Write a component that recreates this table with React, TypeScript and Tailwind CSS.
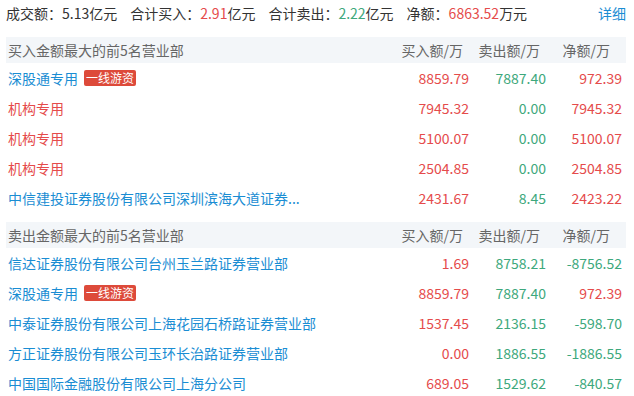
import React from "react";

type Row = {
  name: string;
  nameColor: "blue" | "red";
  tag?: string;
  buy: string;
  sell: string;
  net: string;
};

const buyRows: Row[] = [
  { name: "深股通专用", nameColor: "blue", tag: "一线游资", buy: "8859.79", sell: "7887.40", net: "972.39" },
  { name: "机构专用", nameColor: "red", buy: "7945.32", sell: "0.00", net: "7945.32" },
  { name: "机构专用", nameColor: "red", buy: "5100.07", sell: "0.00", net: "5100.07" },
  { name: "机构专用", nameColor: "red", buy: "2504.85", sell: "0.00", net: "2504.85" },
  { name: "中信建投证券股份有限公司深圳滨海大道证券...", nameColor: "blue", buy: "2431.67", sell: "8.45", net: "2423.22" },
];

const sellRows: Row[] = [
  { name: "信达证券股份有限公司台州玉兰路证券营业部", nameColor: "blue", buy: "1.69", sell: "8758.21", net: "-8756.52" },
  { name: "深股通专用", nameColor: "blue", tag: "一线游资", buy: "8859.79", sell: "7887.40", net: "972.39" },
  { name: "中泰证券股份有限公司上海花园石桥路证券营业部", nameColor: "blue", buy: "1537.45", sell: "2136.15", net: "-598.70" },
  { name: "方正证券股份有限公司玉环长治路证券营业部", nameColor: "blue", buy: "0.00", sell: "1886.55", net: "-1886.55" },
  { name: "中国国际金融股份有限公司上海分公司", nameColor: "blue", buy: "689.05", sell: "1529.62", net: "-840.57" },
];

function Section({ title, rows, className }: { title: string; rows: Row[]; className?: string }) {
  return (
    <div className={className}>
      <div className="grid grid-cols-[1fr_77px_77px_80px] h-[26px] items-center bg-[#f3f6f9] text-[#666] pl-[2px]">
        <div>{title}</div>
        <div className="text-right pr-[6px]">买入额/万</div>
        <div className="text-right pr-[6px]">卖出额/万</div>
        <div className="text-right pr-[16px]">净额/万</div>
      </div>
      {rows.map((r, i) => (
        <div key={i} className="grid grid-cols-[1fr_77px_77px_80px] h-[30px] items-center pl-[2px]">
          <div className="flex items-center whitespace-nowrap">
            <span className={r.nameColor === "blue" ? "text-[#1a8dd3]" : "text-[#e54b4b]"}>{r.name}</span>
            {r.tag && (
              <span className="ml-[6px] h-[16px] px-[2px] rounded-[2px] bg-[#dd4a3a] text-white text-[12px] leading-[16px]">
                {r.tag}
              </span>
            )}
          </div>
          <div className="text-right text-[#e54b4b]">{r.buy}</div>
          <div className="text-right text-[#3da87c]">{r.sell}</div>
          <div className={"text-right pr-[4px] " + (r.net.startsWith("-") ? "text-[#3da87c]" : "text-[#e54b4b]")}>
            {r.net}
          </div>
        </div>
      ))}
    </div>
  );
}

export default function App() {
  return (
    <div className="w-[634px] h-[396px] bg-white overflow-hidden font-['Noto_Sans_CJK_SC',sans-serif] text-[14px] leading-[20px] text-[#333]">
      <div className="flex items-center h-[26px] pl-[6px] pr-[8px]">
        <span>成交额：5.13亿元</span>
        <span className="ml-[13px]">
          合计买入：<span className="text-[#e54b4b]">2.91</span>亿元
        </span>
        <span className="ml-[13px]">
          合计卖出：<span className="text-[#3da87c]">2.22</span>亿元
        </span>
        <span className="ml-[13px]">
          净额：<span className="text-[#e54b4b]">6863.52</span>万元
        </span>
        <span className="ml-auto text-[#1a8dd3]">详细</span>
      </div>
      <div className="pl-[6px] pr-[8px]">
        <Section title="买入金额最大的前5名营业部" rows={buyRows} className="mt-[11px]" />
        <Section title="卖出金额最大的前5名营业部" rows={sellRows} className="mt-[9px]" />
      </div>
    </div>
  );
}
